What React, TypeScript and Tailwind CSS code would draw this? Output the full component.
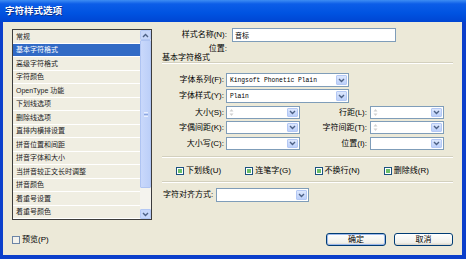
import React from "react";

const listItems = [
  "常规",
  "基本字符格式",
  "高级字符格式",
  "字符颜色",
  "OpenType 功能",
  "下划线选项",
  "删除线选项",
  "直排内横排设置",
  "拼音位置和间距",
  "拼音字体和大小",
  "当拼音较正文长时调整",
  "拼音颜色",
  "着重号设置",
  "着重号颜色",
];

function Chevron({ up = false }: { up?: boolean }) {
  return (
    <svg width="7" height="5" viewBox="0 0 7 5">
      <path
        d={up ? "M1 4 L3.5 1.5 L6 4" : "M1 1 L3.5 3.5 L6 1"}
        fill="none"
        stroke="#4D6185"
        strokeWidth="1.4"
      />
    </svg>
  );
}

function DropBtn() {
  return (
    <div className="flex h-full w-[11px] shrink-0 items-center justify-center rounded-[1px] border border-[#B4C8F4] bg-[linear-gradient(to_bottom,#DCE7FD,#BCD0FA)]">
      <Chevron />
    </div>
  );
}

function Spinner() {
  return (
    <svg width="5" height="9" viewBox="0 0 5 9" className="ml-[1px] shrink-0">
      <path d="M2.5 1 L4.5 3.5 H0.5 Z" fill="#D0D0D0" />
      <path d="M2.5 8 L4.5 5.5 H0.5 Z" fill="#D0D0D0" />
    </svg>
  );
}

function Field({
  w,
  h = "h-[14px]",
  text,
  spin,
}: {
  w: string;
  h?: string;
  text?: string;
  spin?: boolean;
}) {
  return (
    <div className={`${w} ${h} flex items-center border border-[#7F9DB9] bg-white p-[1px]`}>
      {spin && <Spinner />}
      <div className="flex-1 overflow-hidden whitespace-nowrap pl-[2px] font-['Liberation_Mono',monospace] text-[6.3px] leading-[9px] text-black">
        {text}
      </div>
      <DropBtn />
    </div>
  );
}

function Check({ on = true }: { on?: boolean }) {
  return (
    <div
      className={`flex h-[8px] w-[8px] items-center justify-center border ${
        on ? "border-[#1C5180] bg-white" : "border-[#6B84A6] bg-[#F3F2EC]"
      }`}
    >
      {on && <div className="h-[4px] w-[4px] bg-[#6CC06A]" />}
    </div>
  );
}

function Sep() {
  return <div className="h-[2px] border-t border-[#D3D0BE] border-b border-b-white" />;
}

function Label({ w, children }: { w: string; children: React.ReactNode }) {
  return <div className={`${w} shrink-0 text-right text-[8px] leading-none text-black`}>{children}</div>;
}

export default function App() {
  return (
    <div className="flex h-[259px] w-[466px] flex-col overflow-hidden font-['Liberation_Sans','Noto_Sans_CJK_SC',sans-serif]">
      <div className="flex h-[22px] shrink-0 items-center bg-[linear-gradient(to_bottom,#3E8DF3_0%,#0C5DE8_18%,#0053E1_60%,#0045D2_100%)] pl-[5px]">
        <span className="text-[9.5px] font-bold text-white [text-shadow:1px_1px_0_#0A2E8C]">字符样式选项</span>
      </div>

      <div className="flex flex-1 border-b-[4px] border-l-[3px] border-r-[4px] border-[#0B3FCB] bg-[#ECE9D8]">
        {/* left column */}
        <div className="ml-[9px] flex w-[140px] flex-col pb-[9px] pt-[7px]">
          <div className="flex h-[191px] border border-[#3C3C3C] bg-[#F0EEE2]">
            <div className="flex flex-1 flex-col">
              {listItems.map((item, i) => (
                <div
                  key={item}
                  className={`flex h-[13.5px] shrink-0 items-center border-b border-white pl-[3px] text-[7px] leading-none ${
                    i === 1 ? "bg-[#316AC5] text-white" : "text-[#222]"
                  }`}
                >
                  {item}
                </div>
              ))}
            </div>
            <div className="flex w-[11px] flex-col bg-[#F4F3EE]">
              <div className="flex h-[10px] items-center justify-center rounded-[1px] border border-[#B4C8F4] bg-[#C6D6FA]">
                <Chevron up />
              </div>
              <div className="flex h-[148px] items-center justify-center rounded-[1px] border border-[#AFC4F2] bg-[linear-gradient(to_right,#C9D8FB,#BCCFF8)]">
                <div className="flex flex-col gap-[1px]">
                  <div className="h-px w-[4px] bg-[#E8EEFD]" />
                  <div className="h-px w-[4px] bg-[#8DA7E0]" />
                  <div className="h-px w-[4px] bg-[#E8EEFD]" />
                </div>
              </div>
              <div className="flex-1" />
              <div className="flex h-[10px] items-center justify-center rounded-[1px] border border-[#B4C8F4] bg-[#C6D6FA]">
                <Chevron />
              </div>
            </div>
          </div>
          <div className="mt-auto flex h-[13px] items-center gap-[2px]">
            <Check on={false} />
            <span className="text-[8px] leading-none text-black">预览(P)</span>
          </div>
        </div>

        {/* right column */}
        <div className="ml-[10px] flex w-[291px] flex-col pb-[9px] pt-[6px]">
          <div className="flex h-[14px] items-center gap-[5px]">
            <Label w="w-[65px]">样式名称(N):</Label>
            <div className="flex h-[14px] w-[164px] items-center border border-[#7F9DB9] bg-white pl-[2px] text-[7px] leading-none text-black">
              音标
            </div>
          </div>
          <div className="mt-[2px] flex h-[10px] items-center">
            <Label w="w-[65px]">位置:</Label>
          </div>
          <div className="flex h-[8px] items-center text-[8px] leading-none text-black">基本字符格式</div>
          <Sep />

          <div className="mt-[9px] flex items-center gap-[2px]">
            <Label w="w-[62px]">字体系列(F):</Label>
            <Field w="w-[123px]" text="Kingsoft Phonetic Plain" />
          </div>
          <div className="mt-[2px] flex items-center gap-[2px]">
            <Label w="w-[62px]">字体样式(Y):</Label>
            <Field w="w-[123px]" text="Plain" />
          </div>

          <div className="mt-[3px] flex items-center">
            <Label w="w-[62px]">大小(S):</Label>
            <div className="ml-[2px]">
              <Field w="w-[74px]" h="h-[13px]" spin />
            </div>
            <Label w="w-[67px]">行距(L):</Label>
            <div className="ml-[3px]">
              <Field w="w-[74px]" h="h-[13px]" spin />
            </div>
          </div>
          <div className="mt-[2px] flex items-center">
            <Label w="w-[62px]">字偶间距(K):</Label>
            <div className="ml-[2px]">
              <Field w="w-[74px]" h="h-[13px]" />
            </div>
            <Label w="w-[67px]">字符间距(T):</Label>
            <div className="ml-[3px]">
              <Field w="w-[74px]" h="h-[13px]" spin />
            </div>
          </div>
          <div className="mt-[3px] flex items-center">
            <Label w="w-[62px]">大小写(C):</Label>
            <div className="ml-[2px]">
              <Field w="w-[74px]" h="h-[13px]" />
            </div>
            <Label w="w-[67px]">位置(I):</Label>
            <div className="ml-[3px]">
              <Field w="w-[74px]" h="h-[13px]" />
            </div>
          </div>

          <div className="mt-[6px]">
            <Sep />
          </div>

          <div className="mt-[8px] flex h-[10px] items-center pl-[14px]">
            {["下划线(U)", "连笔字(G)", "不换行(N)", "删除线(R)"].map((t) => (
              <div key={t} className="flex w-[70px] items-center gap-[2px]">
                <Check />
                <span className="text-[8px] leading-none text-black">{t}</span>
              </div>
            ))}
          </div>

          <div className="mt-[5px]">
            <Sep />
          </div>

          <div className="mt-[5px] flex items-center gap-[3px]">
            <div className="pl-[1px] text-[8px] leading-none text-black">字符对齐方式:</div>
            <Field w="w-[93px]" />
          </div>

          <div className="mt-auto flex justify-end gap-[8px]">
            <button className="flex h-[13px] w-[60px] items-center justify-center rounded-[3px] border border-[#003C74] bg-[linear-gradient(to_bottom,#FFFFFF,#F0F0EA_80%,#D6D0C5)] text-[8px] leading-none text-black shadow-[inset_0_0_0_1px_#9DB9EB]">
              确定
            </button>
            <button className="flex h-[13px] w-[59px] items-center justify-center rounded-[3px] border border-[#003C74] bg-[linear-gradient(to_bottom,#FFFFFF,#F0F0EA_80%,#D6D0C5)] text-[8px] leading-none text-black">
              取消
            </button>
          </div>
        </div>
      </div>
    </div>
  );
}
